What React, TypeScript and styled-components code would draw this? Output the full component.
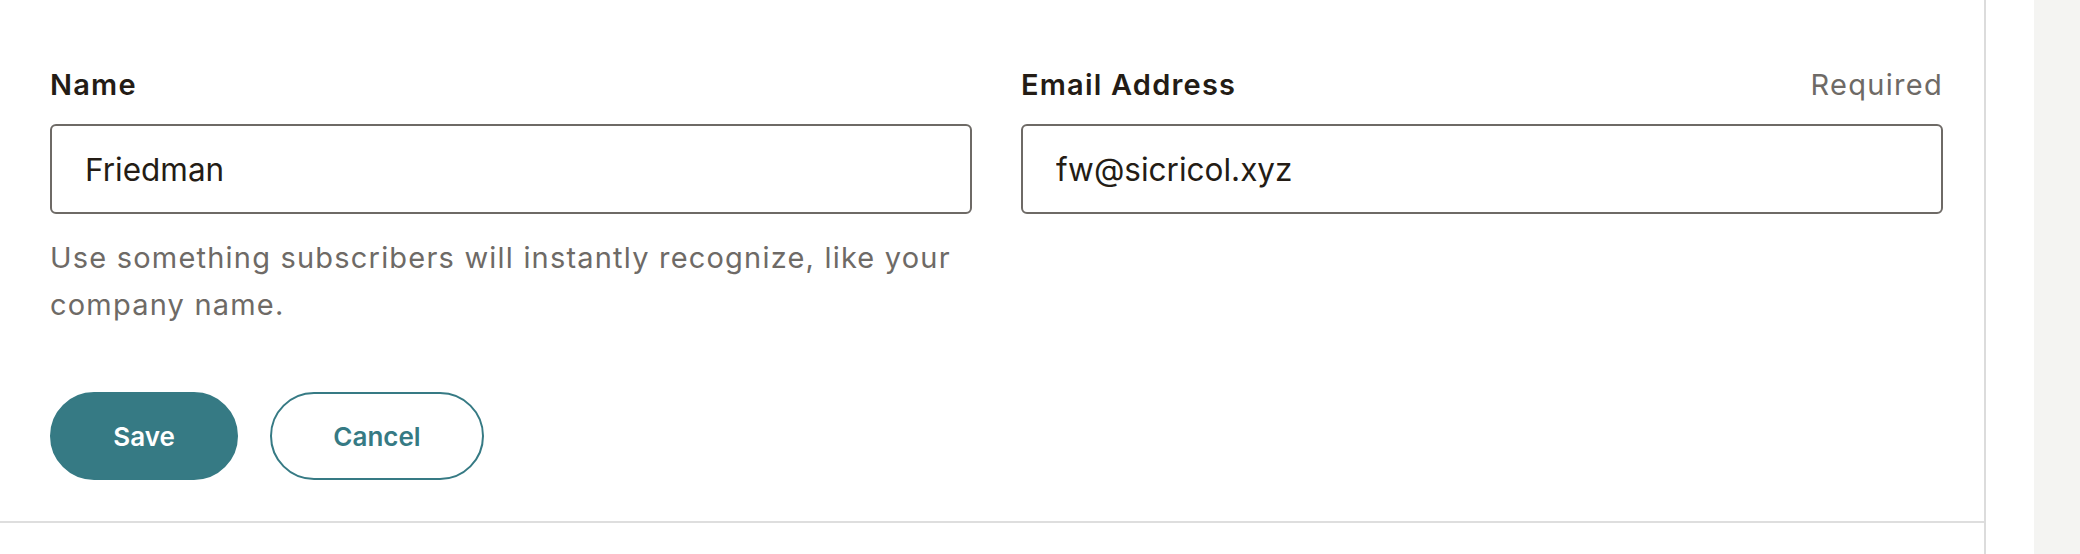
import React from "react";
import styled, { createGlobalStyle } from "styled-components";

const GlobalStyle = createGlobalStyle`
  html, body, #root {
    margin: 0;
    padding: 0;
    height: 100%;
  }
  body {
    background: #ffffff;
    font-family: Inter, "Noto Sans", sans-serif;
    color: #241c15;
  }
  * { box-sizing: border-box; }
`;

const Page = styled.div`
  display: grid;
  grid-template-columns: 1986px 48px 1fr;
  height: 100%;
  min-height: 554px;
`;

const Panel = styled.main`
  border-right: 2px solid #dcdcdc;
  background: #ffffff;
`;

const Spacer = styled.div`
  background: #ffffff;
`;

const Sidebar = styled.aside`
  background: #f4f4f2;
`;

const Form = styled.form`
  padding: 65px 41px 41px 50px;
  border-bottom: 2px solid #dedede;
`;

const Fields = styled.div`
  display: grid;
  grid-template-columns: 1fr 1fr;
  column-gap: 49px;
`;

const Field = styled.div`
  display: flex;
  flex-direction: column;
`;

const LabelRow = styled.div`
  display: flex;
  justify-content: space-between;
  align-items: baseline;
`;

const Label = styled.label`
  font-size: 29px;
  line-height: 40px;
  font-weight: 600;
  letter-spacing: 1.2px;
  color: #241c15;
`;

const Hint = styled.span`
  font-size: 29px;
  line-height: 40px;
  font-weight: 400;
  letter-spacing: 1.3px;
  color: #6e6a66;
`;

const Input = styled.input`
  margin-top: 19px;
  height: 90px;
  width: 100%;
  border: 2px solid #6e6a66;
  border-radius: 6px;
  padding: 0 33px;
  font-family: inherit;
  font-size: 31.5px;
  color: #241c15;
  background: #ffffff;
  outline: none;
`;

const Help = styled.p`
  margin: 20px 0 0;
  font-size: 29px;
  line-height: 47px;
  letter-spacing: 1.2px;
  color: #6e6a66;
`;

const Actions = styled.div`
  display: flex;
  gap: 32px;
  margin-top: 64px;
`;

const Button = styled.button<{ $primary?: boolean }>`
  height: 88px;
  width: ${(p) => (p.$primary ? "188px" : "214px")};
  border-radius: 44px;
  font-family: inherit;
  font-size: 26px;
  font-weight: 600;
  cursor: pointer;
  border: 2px solid #367a84;
  background: ${(p) => (p.$primary ? "#367a84" : "#ffffff")};
  color: ${(p) => (p.$primary ? "#ffffff" : "#367a84")};
`;

export default function App() {
  return (
    <>
      <GlobalStyle />
      <Page>
        <Panel>
          <Form onSubmit={(e) => e.preventDefault()}>
            <Fields>
              <Field>
                <LabelRow>
                  <Label htmlFor="name">Name</Label>
                </LabelRow>
                <Input id="name" defaultValue="Friedman" />
                <Help>
                  Use something subscribers will instantly recognize, like your company name.
                </Help>
              </Field>
              <Field>
                <LabelRow>
                  <Label htmlFor="email">Email Address</Label>
                  <Hint>Required</Hint>
                </LabelRow>
                <Input id="email" defaultValue="fw@sicricol.xyz" />
              </Field>
            </Fields>
            <Actions>
              <Button type="submit" $primary>
                Save
              </Button>
              <Button type="button">Cancel</Button>
            </Actions>
          </Form>
        </Panel>
        <Spacer />
        <Sidebar />
      </Page>
    </>
  );
}
